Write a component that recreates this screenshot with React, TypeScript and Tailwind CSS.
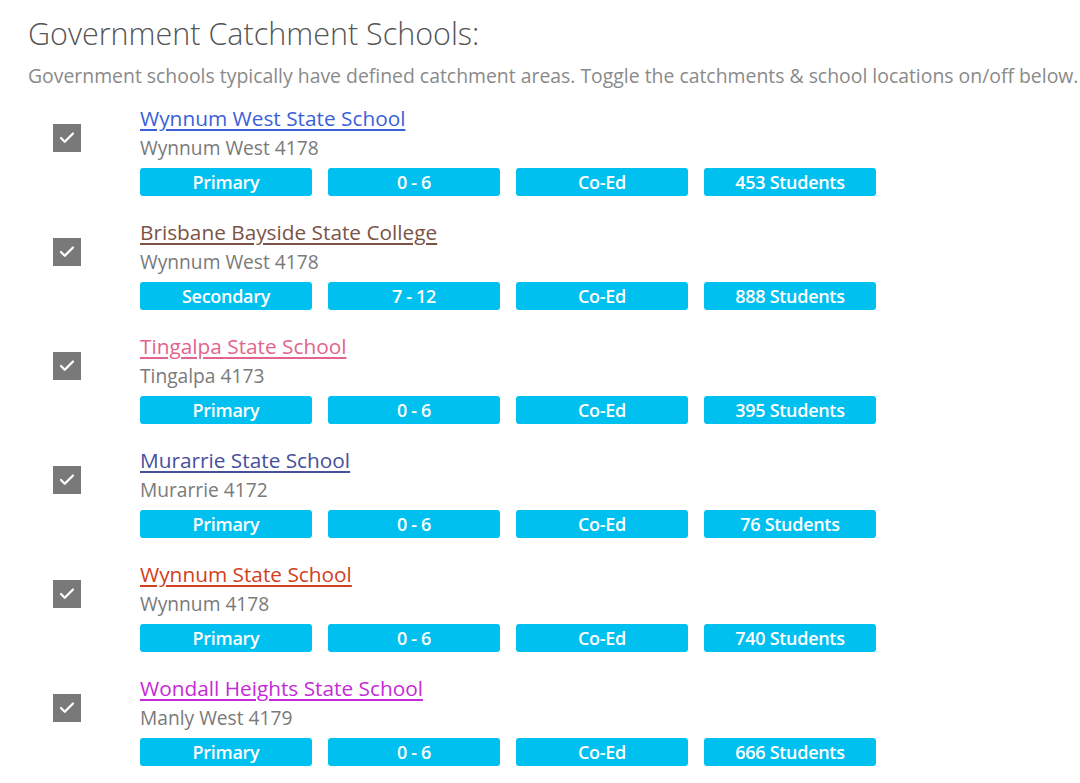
import { Check } from 'lucide-react'

type School = {
  name: string
  suburb: string
  color: string
  level: string
  years: string
  students: number
}

const schools: School[] = [
  { name: 'Wynnum West State School', suburb: 'Wynnum West 4178', color: 'text-[#3b5fd9] decoration-[#3b5fd9]', level: 'Primary', years: '0 - 6', students: 453 },
  { name: 'Brisbane Bayside State College', suburb: 'Wynnum West 4178', color: 'text-[#7b5446] decoration-[#7b5446]', level: 'Secondary', years: '7 - 12', students: 888 },
  { name: 'Tingalpa State School', suburb: 'Tingalpa 4173', color: 'text-[#e2648e] decoration-[#e2648e]', level: 'Primary', years: '0 - 6', students: 395 },
  { name: 'Murarrie State School', suburb: 'Murarrie 4172', color: 'text-[#46509c] decoration-[#46509c]', level: 'Primary', years: '0 - 6', students: 76 },
  { name: 'Wynnum State School', suburb: 'Wynnum 4178', color: 'text-[#d2401c] decoration-[#d2401c]', level: 'Primary', years: '0 - 6', students: 740 },
  { name: 'Wondall Heights State School', suburb: 'Manly West 4179', color: 'text-[#c42bd6] decoration-[#c42bd6]', level: 'Primary', years: '0 - 6', students: 666 },
]

function Badge({ children }: { children: React.ReactNode }) {
  return (
    <span className="flex h-[28px] w-[172px] items-center justify-center rounded-[3px] bg-[#00c0ef] text-[18px] font-semibold tracking-[-0.3px] text-white">
      {children}
    </span>
  )
}

function SchoolRow({ school }: { school: School }) {
  return (
    <li className="flex">
      <div className="pl-[25px] pt-[20px]">
        <span className="flex h-[28px] w-[28px] items-center justify-center bg-[#797979]">
          <Check className="h-[18px] w-[18px] text-white" strokeWidth={3} />
        </span>
      </div>
      <div className="ml-[59px] flex flex-col">
        <a href="#" className={`text-[20.8px] leading-[28px] underline underline-offset-[3px] ${school.color}`}>
          {school.name}
        </a>
        <span className="mt-[3px] text-[19.2px] leading-[26px] text-[#7a7a7a]">{school.suburb}</span>
        <div className="mt-[7px] flex gap-4">
          <Badge>{school.level}</Badge>
          <Badge>{school.years}</Badge>
          <Badge>Co-Ed</Badge>
          <Badge>{school.students} Students</Badge>
        </div>
      </div>
    </li>
  )
}

export default function App() {
  return (
    <div className="min-h-[783px] bg-white pl-[28px] pt-[13px] font-['Open_Sans',sans-serif]">
      <h2 className="text-[30.5px] font-light leading-[40px] text-[#555555]">Government Catchment Schools:</h2>
      <p className="mt-[11px] whitespace-nowrap text-[19.4px] leading-[24px] text-[#8a8a8a]">
        Government schools typically have defined catchment areas. Toggle the catchments &amp; school locations on/off below.
      </p>
      <ul className="mt-[16px] flex flex-col gap-[22px]">
        {schools.map((s) => (
          <SchoolRow key={s.name} school={s} />
        ))}
      </ul>
    </div>
  )
}
